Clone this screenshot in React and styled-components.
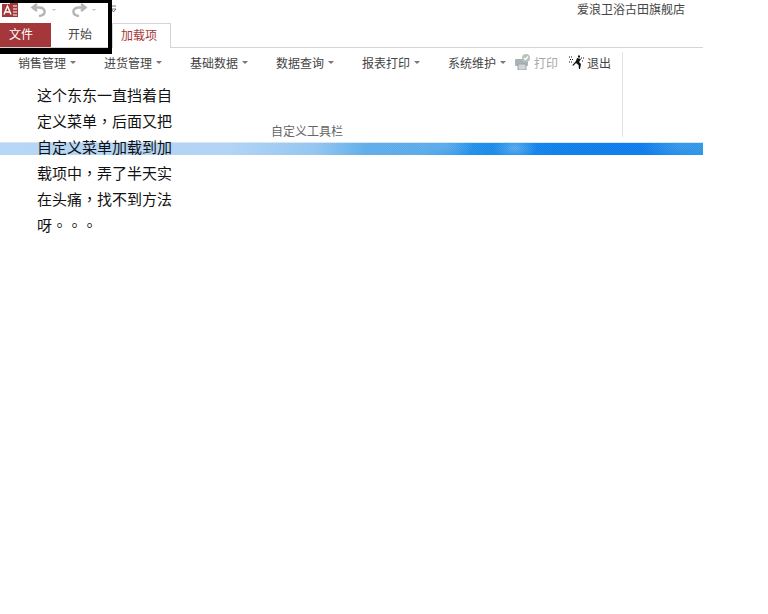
import React from 'react';
import styled, { createGlobalStyle } from 'styled-components';

const GlobalStyle = createGlobalStyle`
   html, body {
      margin: 0;
      padding: 0;
      background: #fff;
      font-family: "Liberation Sans", "Noto Sans CJK SC", sans-serif;
   }
`;

const menus = ['销售管理', '进货管理', '基础数据', '数据查询', '报表打印', '系统维护'];

const App = () => (
   <Page>
      <GlobalStyle />
      <Ribbon>
         <TitleBar>
            <QuickAccess>
               <Logo viewBox='0 0 16 14'>
                  <rect x='8' y='0' width='8' height='14' fill='#a4373a' />
                  <path d='M11 3 H15 M11 6 H15 M11 9 H15 M11 12 H15' stroke='#fff' strokeWidth='1' />
                  <rect x='0' y='1' width='11' height='13' fill='#a4373a' />
                  <path d='M2 11.5 L5.5 3 L9 11.5 M3.3 9 H7.7' fill='none' stroke='#fff' strokeWidth='1.4' />
               </Logo>
               <QuickIcon viewBox='0 0 26 16'>
                  <path d='M7 2 L2.5 5.5 L7 9 M3 5.5 H9 C16.5 5.5 16.5 13 9 14' fill='none' stroke='#b4b4b4' strokeWidth='2.4' />
                  <path d='M22 7 H26 L24 9 Z' fill='#c4c4c4' />
               </QuickIcon>
               <QuickIcon viewBox='0 0 26 16'>
                  <path d='M11 2 L15.5 5.5 L11 9 M15 5.5 H9 C1.5 5.5 1.5 13 9 14' fill='none' stroke='#b4b4b4' strokeWidth='2.4' />
                  <path d='M22 7 H26 L24 9 Z' fill='#c4c4c4' />
               </QuickIcon>
            </QuickAccess>
            <Customize viewBox='0 0 6 8'>
               <path d='M0 1 H5 M0.5 4 H5 L2.5 7 Z' fill='none' stroke='#777' />
            </Customize>
            <ShopName>爱浪卫浴古田旗舰店</ShopName>
         </TitleBar>
         <Tabs>
            <FileTab>文件</FileTab>
            <Tab>开始</Tab>
            <Tab $active>加载项</Tab>
         </Tabs>
         <Toolbar>
            <ToolbarBody>
               <MenuRow>
                  {menus.map((m) => (
                     <MenuItem key={m}>
                        {m}
                        <Caret />
                     </MenuItem>
                  ))}
                  <PrintButton>
                     <svg width='16' height='16' viewBox='0 0 16 16'>
                        <rect x='0' y='5' width='13' height='7' rx='1' fill='#a9b4b8' />
                        <rect x='3' y='10' width='8' height='6' fill='#d0d5d8' stroke='#9aa4a8' />
                        <circle cx='11' cy='4' r='4' fill='#b7c4b9' />
                        <path d='M9 4 L10.5 5.5 L13 2.5' fill='none' stroke='#fff' strokeWidth='1.2' />
                     </svg>
                     打印
                  </PrintButton>
                  <ExitButton>
                     <svg width='16' height='16' viewBox='0 0 16 16'>
                        <path d='M9 1.5 h2 v2 h-2 Z M8 4 L12 5 L10 8 L12 10 L11 15 L10 15 L9.5 11 L7 9 L4 12 L3.5 11 L7 7 Z' fill='#111' />
                        <path d='M0 3 H4 M1 5.5 H5 M0 8 H3 M12 4 H15 M13 7 H15' stroke='#111' strokeWidth='1' strokeDasharray='1 1' />
                     </svg>
                     退出
                  </ExitButton>
               </MenuRow>
               <GroupLabel>自定义工具栏</GroupLabel>
            </ToolbarBody>
         </Toolbar>
         <BlueStrip />
      </Ribbon>
      <BlackFrame />
      <Note>这个东东一直挡着自定义菜单，后面又把自定义菜单加载到加载项中，弄了半天实在头痛，找不到方法呀。。。</Note>
   </Page>
);

export default App;

const Page = styled.div`
   position: relative;
   width: 768px;
   height: 614px;
   overflow: hidden;
   background: #fff;
`;

const Ribbon = styled.div`
   width: 703px;
   display: flex;
   flex-direction: column;
`;

const TitleBar = styled.div`
   height: 23px;
   display: flex;
`;

const QuickAccess = styled.div`
   display: flex;
   gap: 14px;
   padding-left: 2px;
`;

const Logo = styled.svg`
   width: 16px;
   height: 14px;
   margin: 3px -2px 0 0;
`;

const QuickIcon = styled.svg`
   width: 26px;
   height: 16px;
   margin-top: 2px;
`;

const Customize = styled.svg`
   width: 6px;
   height: 8px;
   margin: 5px 0 0 15px;
`;

const ShopName = styled.div`
   margin: 0 18px 0 auto;
   padding-top: 3px;
   font-size: 12px;
   line-height: 14px;
   color: #444;
`;

const Tabs = styled.div`
   height: 24px;
   display: flex;
   border-bottom: 1px solid #d4d4d4;
`;

const Tab = styled.div`
   width: ${(p) => (p.$active ? '59px' : '61px')};
   height: ${(p) => (p.$active ? '25px' : '24px')};
   box-sizing: border-box;
   padding: ${(p) => (p.$active ? '0 5px 3px 0' : '0 3px 3px 0')};
   display: flex;
   align-items: center;
   justify-content: center;
   font-size: 12px;
   color: ${(p) => (p.$active ? '#a4373a' : '#444')};
   background: #fff;
   border: ${(p) => (p.$active ? '1px solid #d4d4d4' : 'none')};
   border-bottom: none;
`;

const FileTab = styled.div`
   width: 51px;
   height: 24px;
   box-sizing: border-box;
   padding: 0 9px 3px 0;
   display: flex;
   align-items: center;
   justify-content: center;
   font-size: 12px;
   color: #fff;
   background: #a4373a;
`;

const Toolbar = styled.div`
   height: 94px;
`;

const ToolbarBody = styled.div`
   width: 623px;
   height: 85px;
   box-sizing: border-box;
   margin-top: 4px;
   border-right: 1px solid #e2e2e2;
   display: flex;
   flex-direction: column;
   justify-content: space-between;
`;

const MenuRow = styled.div`
   display: flex;
   align-items: center;
   height: 20px;
   padding-left: 18px;
`;

const MenuItem = styled.div`
   width: 86px;
   font-size: 12px;
   color: #444;
   display: flex;
   align-items: center;
`;

const Caret = styled.span`
   width: 0;
   height: 0;
   margin-left: 4px;
   border-left: 3px solid transparent;
   border-right: 3px solid transparent;
   border-top: 3px solid #777;
`;

const PrintButton = styled.div`
   margin-left: -19px;
   display: flex;
   align-items: center;
   gap: 3px;
   font-size: 12px;
   color: #a8a8a8;
`;

const ExitButton = styled.div`
   margin-left: 11px;
   display: flex;
   align-items: center;
   gap: 2px;
   font-size: 12px;
   color: #444;
`;

const GroupLabel = styled.div`
   text-align: center;
   font-size: 12px;
   line-height: 14px;
   margin: 0 8px -2px 0;
   color: #666;
`;

const BlueStrip = styled.div`
   height: 13px;
   box-sizing: border-box;
   border-top: 1px solid #d6e6f6;
   background:
      repeating-conic-gradient(rgba(255, 255, 255, 0.07) 0 25%, transparent 0 50%) 0 0 / 2px 2px,
      radial-gradient(ellipse 22px 13px at 515px 5px, rgba(130, 190, 240, 0.6), transparent),
      radial-gradient(ellipse 40px 12px at 680px 3px, rgba(90, 170, 235, 0.4), transparent),
      radial-gradient(ellipse 30px 12px at 445px 3px, rgba(120, 185, 240, 0.5), transparent),
      linear-gradient(90deg, #b4d5f5 0%, #afd2f5 33%, #90c4f0 45%, #5cacea 52%, #58a9e9 60%, #1e8ee8 67%, #1186e8 72%, #0a7dea 80%, #0a7aea 92%, #2592e6 100%);
`;

const BlackFrame = styled.div`
   position: absolute;
   left: 0;
   top: 0;
   width: 108px;
   height: 45px;
   border-style: solid;
   border-color: #000;
   border-width: 3px 4px 6px 0;
`;

const Note = styled.div`
   position: absolute;
   left: 37px;
   top: 83px;
   width: 136px;
   font-family: "Liberation Sans", "Noto Sans CJK TC", sans-serif;
   font-size: 15px;
   line-height: 26px;
   color: #111;
`;
